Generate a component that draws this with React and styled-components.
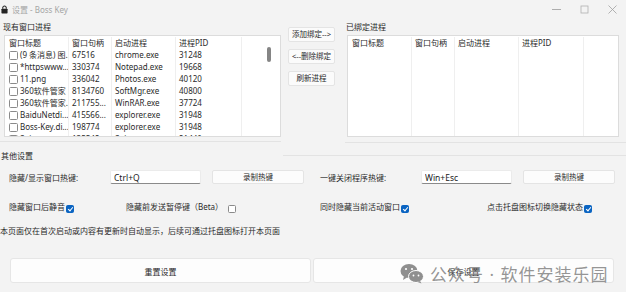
import React from 'react'
import styled, { createGlobalStyle } from 'styled-components'

const GlobalStyle = createGlobalStyle`
    body {
        margin: 0;
        background: #f3f3f3;
        font-family: "Noto Sans", "Noto Sans CJK SC", sans-serif;
    }
`

const processes = [
    { title: '(9 条消息) 图...', handle: '67516', exe: 'chrome.exe', pid: '31248' },
    { title: '*httpswww...', handle: '330374', exe: 'Notepad.exe', pid: '19668' },
    { title: '11.png', handle: '336042', exe: 'Photos.exe', pid: '40120' },
    { title: '360软件管家', handle: '8134760', exe: 'SoftMgr.exe', pid: '40800' },
    { title: '360软件管家...', handle: '211755...', exe: 'WinRAR.exe', pid: '37724' },
    { title: 'BaiduNetdi...', handle: '415566...', exe: 'explorer.exe', pid: '31948' },
    { title: 'Boss-Key.di...', handle: '198774', exe: 'explorer.exe', pid: '31948' },
    { title: 'Snipaste...', handle: '135542', exe: 'Snipaste.exe', pid: '21440' },
]

const columns = [63, 43, 64, 66]

function App() {
    return (
        <Window>
            <GlobalStyle />
            <TitleBar>
                <LockIcon viewBox="0 0 8 10">
                    <path d="M2 4V3a2 2 0 0 1 4 0v1" stroke="#222" strokeWidth="1.2" fill="none" />
                    <rect x="0.5" y="4" width="7" height="5.5" rx="0.8" fill="#222" />
                </LockIcon>
                <Title>设置 - Boss Key</Title>
                <WinControls>
                    <svg width="9" height="9" viewBox="0 0 9 9"><path d="M0 4.5h9" stroke="#9a9a9a" strokeWidth="0.8" /></svg>
                    <svg width="9" height="9" viewBox="0 0 9 9"><rect x="1" y="1" width="7" height="7" fill="none" stroke="#b0b0b0" strokeWidth="0.8" /></svg>
                    <svg width="9" height="9" viewBox="0 0 9 9"><path d="M0.5 0.5l8 8M8.5 0.5l-8 8" stroke="#a0a0a0" strokeWidth="0.8" /></svg>
                </WinControls>
            </TitleBar>

            <Top>
                <LeftPanel>
                    <GroupLabel>现有窗口进程</GroupLabel>
                    <ListBox $width={277}>
                        <Table>
                            <Row $header>
                                <Cell $w={columns[0]}>窗口标题</Cell>
                                <Cell $w={columns[1]}>窗口句柄</Cell>
                                <Cell $w={columns[2]}>启动进程</Cell>
                                <Cell $w={columns[3]}>进程PID</Cell>
                            </Row>
                            {processes.map((p, i) => (
                                <Row key={i}>
                                    <Cell $w={columns[0]}><SmallBox />{p.title}</Cell>
                                    <Cell $w={columns[1]}>{p.handle}</Cell>
                                    <Cell $w={columns[2]}>{p.exe}</Cell>
                                    <Cell $w={columns[3]}>{p.pid}</Cell>
                                </Row>
                            ))}
                        </Table>
                        <ScrollBar>
                            <Thumb />
                        </ScrollBar>
                    </ListBox>
                </LeftPanel>

                <ButtonColumn>
                    <SmallButton>添加绑定--&gt;</SmallButton>
                    <SmallButton>&lt;--删除绑定</SmallButton>
                    <SmallButton>刷新进程</SmallButton>
                </ButtonColumn>

                <RightPanel>
                    <GroupLabel>已绑定进程</GroupLabel>
                    <ListBox $width={272}>
                        <Table>
                            <Row $header>
                                <Cell $w={63}>窗口标题</Cell>
                                <Cell $w={43}>窗口句柄</Cell>
                                <Cell $w={64}>启动进程</Cell>
                                <Cell $w={65}>进程PID</Cell>
                            </Row>
                            <Row $fill>
                                <Cell $w={63} />
                                <Cell $w={43} />
                                <Cell $w={64} />
                                <Cell $w={65} />
                            </Row>
                        </Table>
                    </ListBox>
                </RightPanel>
            </Top>

            <SettingsHeader>
                <span>其他设置</span>
            </SettingsHeader>

            <HotkeyRow>
                <HotkeyGroup>
                    <FieldLabel>隐藏/显示窗口热键:</FieldLabel>
                    <KeyInput value="Ctrl+Q" readOnly />
                    <RecordButton>录制热键</RecordButton>
                </HotkeyGroup>
                <HotkeyGroup>
                    <FieldLabel>一键关闭程序热键:</FieldLabel>
                    <KeyInput value="Win+Esc" readOnly />
                    <RecordButton>录制热键</RecordButton>
                </HotkeyGroup>
            </HotkeyRow>

            <OptionRow>
                <Option $w={117}>隐藏窗口后静音<Check $on /></Option>
                <Option $w={194}>隐藏前发送暂停键（Beta）<Check /></Option>
                <Option $w={167}>同时隐藏当前活动窗口<Check $on /></Option>
                <Option>点击托盘图标切换隐藏状态<Check $on /></Option>
            </OptionRow>

            <Note>本页面仅在首次启动或内容有更新时自动显示，后续可通过托盘图标打开本页面</Note>

            <Footer>
                <BigButton>重置设置</BigButton>
                <BigButton>保存设置</BigButton>
                <Watermark>
                    <svg width="24" height="21" viewBox="0 0 24 21">
                        <ellipse cx="9" cy="8" rx="8.5" ry="7" fill="#8f8f8f" />
                        <path d="M4 13l-1 4 4-2.5z" fill="#8f8f8f" />
                        <ellipse cx="16" cy="13.5" rx="7.5" ry="6" fill="#8f8f8f" stroke="#fff" strokeWidth="1" />
                        <path d="M20 18l1.5 2.5-4-1.5z" fill="#8f8f8f" />
                        <circle cx="6" cy="6" r="1.1" fill="#fff" />
                        <circle cx="12" cy="6" r="1.1" fill="#fff" />
                        <circle cx="13.5" cy="12.5" r="0.9" fill="#fff" />
                        <circle cx="18.5" cy="12.5" r="0.9" fill="#fff" />
                    </svg>
                    <span>公众号 · 软件安装乐园</span>
                </Watermark>
            </Footer>
        </Window>
    )
}

export default App

const Window = styled.div`
    width: 626px;
    height: 292px;
    overflow: hidden;
    display: flex;
    flex-direction: column;
    background: #f3f3f3;
    color: #2a2a2a;
    font-size: 8px;
`

const TitleBar = styled.div`
    height: 18px;
    display: flex;
    align-items: center;
    padding-left: 1px;
`

const LockIcon = styled.svg`
    width: 7px;
    height: 9px;
`

const Title = styled.div`
    margin-left: 4px;
    font-size: 8px;
    color: #a5a5a5;
`

const WinControls = styled.div`
    margin-left: auto;
    display: flex;
    align-items: center;
    gap: 19px;
    padding-right: 9px;
`

const Top = styled.div`
    display: flex;
    height: 125px;
`

const LeftPanel = styled.div`
    width: 281px;
    padding-left: 3px;
    box-sizing: border-box;
    border-bottom: 1px solid #e3e3e3;
    height: 124px;
`

const RightPanel = styled.div`
    flex: 1;
    margin-left: 10px;
    padding-left: 1px;
    border-bottom: 1px solid #e3e3e3;
`

const GroupLabel = styled.div`
    height: 12px;
    line-height: 12px;
    margin: 3px 0 2px;
`

const ListBox = styled.div`
    width: ${p => p.$width}px;
    height: 102px;
    margin-left: 1px;
    box-sizing: border-box;
    background: #fff;
    border: 1px solid #dcdcdc;
    display: flex;
    overflow: hidden;
`

const Table = styled.div`
    flex: 1;
    display: flex;
    flex-direction: column;
    padding: 1px 0 0 1px;
    overflow: hidden;
`

const Row = styled.div`
    display: flex;
    height: 12px;
    flex-shrink: 0;
    ${p => p.$fill && 'flex: 1;'}
`

const Cell = styled.div`
    width: ${p => p.$w}px;
    box-sizing: border-box;
    padding-left: 3px;
    border-right: 1px solid #efefef;
    white-space: nowrap;
    overflow: hidden;
    line-height: 12px;
    display: flex;
    align-items: center;
    gap: 2px;
`

const SmallBox = styled.span`
    width: 7px;
    height: 7px;
    flex-shrink: 0;
    border: 1px solid #8a8a8a;
    border-radius: 1.5px;
    background: #fff;
`

const ScrollBar = styled.div`
    width: 11px;
    margin-right: 6px;
    padding-top: 11px;
    display: flex;
    justify-content: center;
`

const Thumb = styled.div`
    width: 4px;
    height: 15px;
    border-radius: 2px;
    background: #858585;
`

const ButtonColumn = styled.div`
    display: flex;
    flex-direction: column;
    gap: 7px;
    width: 47px;
    margin-left: 7px;
    padding-top: 9px;
`

const SmallButton = styled.div`
    height: 13px;
    line-height: 13px;
    text-align: center;
    font-size: 7.5px;
    background: #fbfbfb;
    border: 1px solid #e4e4e4;
    border-radius: 2px;
    white-space: nowrap;
`

const SettingsHeader = styled.div`
    display: flex;
    align-items: center;
    height: 12px;
    margin-top: 6px;
    padding-left: 1px;

    &::after {
        content: '';
        margin-left: 250px;
        flex: 1;
        border-top: 1px solid #e3e3e3;
    }
`

const HotkeyRow = styled.div`
    display: grid;
    grid-template-columns: 311px 1fr;
    margin-top: 9px;
`

const HotkeyGroup = styled.div`
    display: flex;
    align-items: center;
    padding-left: 9px;
    height: 14px;
`

const FieldLabel = styled.div`
    width: 101px;
`

const KeyInput = styled.input`
    width: 91px;
    height: 14px;
    box-sizing: border-box;
    border: 1px solid #ebebeb;
    border-bottom: 1px solid #8a8a8a;
    border-radius: 2px;
    background: #fff;
    padding: 0 3px;
    font: inherit;
    font-size: 8.5px;
    color: #1a1a1a;
    outline: none;
`

const RecordButton = styled.div`
    width: 90px;
    height: 12px;
    line-height: 12px;
    margin-left: 11px;
    text-align: center;
    font-size: 7.5px;
    background: #fcfcfc;
    border: 1px solid #e4e4e4;
    border-radius: 2px;
`

const OptionRow = styled.div`
    display: flex;
    padding-left: 9px;
    margin-top: 17px;
    height: 14px;
`

const Option = styled.div`
    width: ${p => (p.$w ? `${p.$w}px` : 'auto')};
    display: flex;
    align-items: flex-start;
    gap: 1px;
    white-space: nowrap;
    line-height: 12px;
`

const Check = styled.span`
    width: 8px;
    height: 8px;
    margin-top: 4px;
    margin-left: ${p => (p.$on ? '0' : '4px')};
    border-radius: 1.5px;
    box-sizing: border-box;
    position: relative;
    background: ${p => (p.$on ? '#0a64c2' : '#fff')};
    border: 1px solid ${p => (p.$on ? '#0a64c2' : '#8a8a8a')};

    &::after {
        content: '';
        display: ${p => (p.$on ? 'block' : 'none')};
        position: absolute;
        left: 2px;
        top: 0px;
        width: 2px;
        height: 4px;
        border: solid #fff;
        border-width: 0 1px 1px 0;
        transform: rotate(40deg);
    }
`

const Note = styled.div`
    margin-top: 10px;
    height: 12px;
    line-height: 12px;
`

const Footer = styled.div`
    position: relative;
    display: flex;
    gap: 2px;
    padding-left: 10px;
    margin-top: 21px;
`

const BigButton = styled.div`
    width: 301px;
    height: 25px;
    line-height: 25px;
    box-sizing: border-box;
    text-align: center;
    font-size: 8px;
    background: #fdfdfd;
    border: 1px solid #e6e6e6;
    border-radius: 3px;
`

const Watermark = styled.div`
    position: absolute;
    left: 400px;
    top: 3px;
    display: flex;
    align-items: center;
    gap: 6px;
    font-size: 17px;
    letter-spacing: 1px;
    color: rgba(130, 130, 130, 0.85);
    pointer-events: none;
`
